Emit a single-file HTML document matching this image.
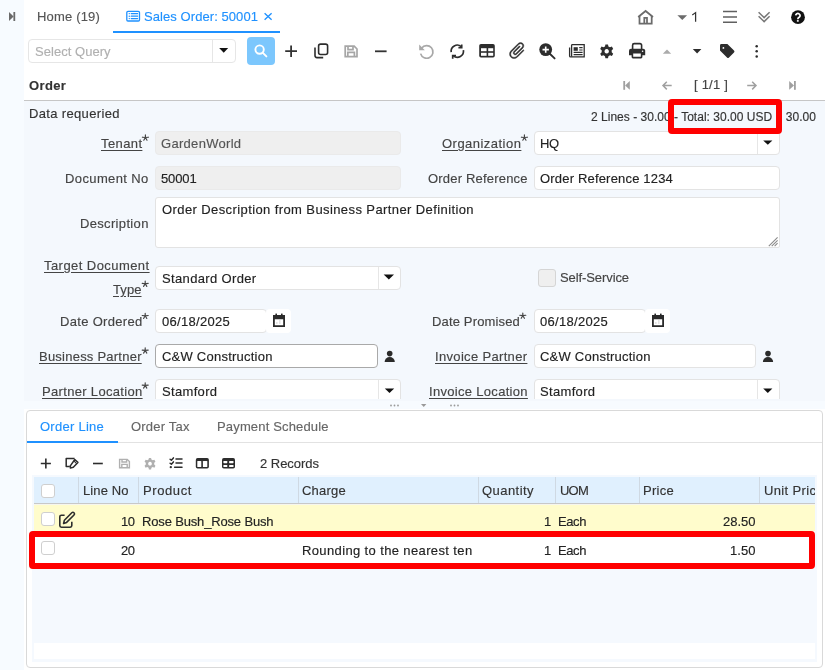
<!DOCTYPE html>
<html><head><meta charset="utf-8">
<style>
*{box-sizing:border-box;margin:0;padding:0}
html,body{width:825px;height:670px;overflow:hidden;background:#fff;font-family:"Liberation Sans",sans-serif;position:relative}
.a{position:absolute}
.t{position:absolute;white-space:pre;will-change:transform;-webkit-text-stroke:0.15px currentColor}
svg{position:absolute;overflow:visible}
.fld{position:absolute;background:#fff;border:1px solid #e3e3e3;border-radius:4px}
.ro{background:#efefef;border-color:#eaeaeaff}
.sep{position:absolute;top:0;bottom:0;width:1px;background:#e6e6e6}
</style></head><body>
<!-- sidebar -->
<div class="a" style="left:0;top:0;width:24px;height:670px;background:#f7fbff"></div>
<svg style="left:0;top:0" width="24" height="30"><path d="M9 12 L13.6 16.5 L9 21 Z" fill="#6a6a6a"/><rect x="13.4" y="12" width="1.8" height="9" fill="#6a6a6a"/></svg>

<!-- tabs -->
<div class="a" style="left:113px;top:31px;width:167px;height:2px;background:#1f91ff"></div>
<svg style="left:0;top:0" width="825" height="40">
 <g fill="none" stroke="#1f91ff">
  <rect x="126.8" y="11.4" width="12.7" height="9.6" rx="1.2" stroke-width="1.3"/>
  <path d="M131.2 13.6H137.6M131.2 16.2H137.6M131.2 18.6H137.6" stroke-width="1.2" stroke-linecap="round"/>
  <path d="M264.6 13.3L271.6 19.8M271.6 13.3L264.6 19.8" stroke-width="1.35"/>
 </g>
 <g fill="#1f91ff"><circle cx="129.3" cy="13.6" r="0.7"/><circle cx="129.3" cy="16.2" r="0.7"/><circle cx="129.3" cy="18.6" r="0.7"/></g>
 <!-- home -->
 <g fill="none" stroke="#6b6b6b" stroke-width="1.75" stroke-linejoin="miter">
  <path d="M638.2 17 L645.6 11 L653 17"/>
  <path d="M639.5 16 V23.6 H651.7 V16"/>
  <path d="M644.3 23.6 V17.8 H647 V23.6"/>
 </g>
 <path d="M677.4 15.2 H687.1 L682.25 20 Z" fill="#6b6b6b"/>
 <path d="M692.3 14.9L695.6 12.6V21.7" fill="none" stroke="#333" stroke-width="1.25"/>
 <g stroke="#606060" stroke-width="1.5"><path d="M723 11.6H737M723 16.9H737M723 22.2H737"/></g>
 <g fill="none" stroke="#777" stroke-width="1.5"><path d="M758.6 12.2L764.1 17.6L769.6 12.2M758.6 16.2L764.1 21.6L769.6 16.2"/></g>
 <circle cx="798" cy="17.2" r="6.9" fill="#111"/>
 <path d="M795.7 15.4A2.2 2.1 0 1 1 799.4 17.1C798.3 17.7 797.8 18.1 797.8 19.3" fill="none" stroke="#fff" stroke-width="1.7"/>
 <rect x="796.9" y="20.1" width="1.8" height="1.6" fill="#fff"/>
</svg>

<!-- select query -->
<div class="fld" style="left:28px;top:39px;width:208px;height:24px;border-color:#e6e6e6"></div>
<div class="a" style="left:212px;top:40px;width:1px;height:22px;background:#e6e6e6"></div>
<svg style="left:0;top:0" width="825" height="100">
 <path d="M219.2 47.9H228.2L223.7 52.8Z" fill="#111"/>
 <rect x="247" y="37" width="28" height="28" rx="4" fill="#7cc7fd"/>
 <g fill="none" stroke="#fff" stroke-width="1.9"><circle cx="259.6" cy="49.6" r="4.2"/><path d="M262.6 52.6L266.4 56.4" stroke-linecap="round"/></g>
 <g stroke="#333" stroke-width="1.8" fill="none">
  <path d="M285.2 51.2H297M291.1 45.4V57"/>
  <path d="M375 51.3H386.6"/>
 </g>
 <!-- copy -->
 <g fill="none" stroke="#2d2d2d" stroke-width="1.6">
  <rect x="318.6" y="44.1" width="9" height="10.4" rx="2"/>
  <path d="M315 47.5V55.6A2 2 0 0 0 317 57.6H323.2"/>
 </g>
 <!-- save gray -->
 <g fill="none" stroke="#a6a6a6" stroke-width="1.7">
  <path d="M345.2 46.2H354.2L357 49V56.6H345.2Z"/>
  <path d="M348 46.2V49.6H353V46.2M347.8 56.6V52.4H354.4V56.6"/>
 </g>
 <!-- undo gray -->
 <g fill="none" stroke="#a8a8a8" stroke-width="1.7">
  <path d="M421.6 48.2A6.3 6.3 0 1 1 420.6 53.6"/>
 </g>
 <path d="M419.2 44.6V50.2H424.8Z" fill="#a8a8a8"/>
 <!-- refresh -->
 <g fill="none" stroke="#2d2d2d" stroke-width="1.7">
  <path d="M451.2 52.2A6.1 6.1 0 0 1 461.2 46.6"/>
  <path d="M461.7 44.4V47.7H458.4"/>
  <path d="M463.4 50.2A6.1 6.1 0 0 1 453.4 55.8"/>
  <path d="M452.7 58.8V55.5H456"/>
 </g>
 <!-- grid -->
 <rect x="479.2" y="44" width="15.6" height="13.6" rx="1.8" fill="#2d2d2d"/>
 <g fill="#fff"><rect x="481" y="48.2" width="5.6" height="3"/><rect x="488.2" y="48.2" width="5" height="3"/><rect x="481" y="52.8" width="5.6" height="3"/><rect x="488.2" y="52.8" width="5" height="3"/></g>
 <!-- paperclip -->
 <path transform="translate(517.3 50.8) rotate(45) scale(0.83) translate(-12.5 -12)" fill="#2d2d2d" stroke="#2d2d2d" stroke-width="0.45" d="M16.5 6v11.5c0 2.21-1.79 4-4 4s-4-1.79-4-4V5c0-1.38 1.12-2.5 2.5-2.5s2.5 1.12 2.5 2.5v10.5c0 .55-.45 1-1 1s-1-.45-1-1V6H10v9.5c0 1.38 1.12 2.5 2.5 2.5s2.5-1.12 2.5-2.5V5c0-2.21-1.79-4-4-4S7 2.79 7 5v12.5c0 3.04 2.46 5.5 5.5 5.5s5.5-2.46 5.5-5.5V6h-1.5z"/>
 <!-- zoom in -->
 <circle cx="545.7" cy="49.6" r="6.4" fill="#2d2d2d"/>
 <path d="M549.8 53.8L554.6 58.4" stroke="#2d2d2d" stroke-width="1.9" stroke-linecap="round"/>
 <path d="M542.5 49.6H548.9M545.7 46.4V52.8" stroke="#fff" stroke-width="1.6"/>
 <!-- news -->
 <g fill="none" stroke="#2d2d2d" stroke-width="1.3">
  <path d="M571.6 44.6H584.2V56.9H570.6A1 1 0 0 1 569.6 55.9V47.5"/>
  <path d="M571.6 44.6V56.6"/>
 </g>
 <rect x="573.6" y="47.2" width="4.2" height="3.6" fill="#2d2d2d"/>
 <path d="M579.2 47.6H582.6M579.2 50H582.6M573.6 52.4H582.6M573.6 54.6H582.6" stroke="#2d2d2d" stroke-width="1.1"/>
 <!-- gear -->
 <g transform="translate(606.7 51.3)">
  <path fill="#2d2d2d" fill-rule="evenodd" d="M-1.3 -6.9H1.3L1.7 -4.9L3.3 -4L5.2 -4.7L6.5 -2.4L5 -1V1L6.5 2.4L5.2 4.7L3.3 4L1.7 4.9L1.3 6.9H-1.3L-1.7 4.9L-3.3 4L-5.2 4.7L-6.5 2.4L-5 1V-1L-6.5 -2.4L-5.2 -4.7L-3.3 -4L-1.7 -4.9Z M0 -2.2A2.2 2.2 0 1 0 0.01 -2.2Z"/>
 </g>
 <!-- printer -->
 <g fill="none" stroke="#2d2d2d" stroke-width="1.6">
  <path d="M632.6 49V45.2A1.6 1.6 0 0 1 634.2 43.6H640A1.6 1.6 0 0 1 641.6 45.2V49"/>
 </g>
 <path d="M631 48.8H643.2A2 2 0 0 1 645.2 50.8V55.2H629V50.8A2 2 0 0 1 631 48.8Z" fill="#2d2d2d"/>
 <rect x="632.4" y="52.8" width="9.2" height="4.8" rx="0.6" fill="#fff" stroke="#2d2d2d" stroke-width="1.6"/>
 <circle cx="642.6" cy="51.2" r="0.8" fill="#fff"/>
 <!-- up/down -->
 <path d="M662.8 53.8H671.2L667 49.6Z" fill="#ababab"/>
 <path d="M692.8 49H701.4L697.1 53.6Z" fill="#2d2d2d"/>
 <!-- tag -->
 <path d="M721.4 44H727.4L734 50.6A1.4 1.4 0 0 1 734 52.6L729 57.6A1.4 1.4 0 0 1 727 57.6L720 50.6V45.4A1.4 1.4 0 0 1 721.4 44Z" fill="#2d2d2d"/>
 <circle cx="723.4" cy="47.9" r="0.9" fill="#fff"/>
 <g fill="#2d2d2d"><circle cx="756.7" cy="46.2" r="1.25"/><circle cx="756.7" cy="51.3" r="1.25"/><circle cx="756.7" cy="56.5" r="1.25"/></g>
 <!-- page nav -->
 <g fill="#a0a0a0">
  <rect x="623.3" y="81" width="1.8" height="8.8"/><path d="M625.1 85.4L629.8 81V89.8Z"/>
  <rect x="794" y="81" width="1.8" height="8.8"/><path d="M794 85.4L789.2 81V89.8Z"/>
 </g>
 <g fill="none" stroke="#a0a0a0" stroke-width="1.5">
  <path d="M663 85.6H671.7M666.8 81.8L663 85.6L666.8 89.4"/>
  <path d="M756 85.6H747.2M752.2 81.8L756 85.6L752.2 89.4"/>
 </g>
</svg>

<!-- order header line -->
<div class="a" style="left:24px;top:100px;width:801px;height:1px;background:#c6c6c6"></div>
<!-- form bg -->
<div class="a" style="left:24px;top:101px;width:801px;height:300px;background:#f4f8fd"></div>
<div class="a" style="left:24px;top:101px;width:801px;height:298px;overflow:hidden">
 <div style="position:absolute;left:-24px;top:-101px;width:825px;height:670px">
  <div class="fld ro" style="left:155px;top:131px;width:246px;height:24px"></div>
  <div class="fld ro" style="left:155px;top:166px;width:246px;height:24px"></div>
  <div class="fld" style="left:155px;top:197px;width:625px;height:51px;border-radius:3px 3px 2px 3px"></div>
  <div class="fld" style="left:155px;top:266px;width:246px;height:24px"><div class="sep" style="left:222px"></div></div>
  <div class="fld" style="left:155px;top:309px;width:112px;height:24px"></div>
  <div class="fld" style="left:266px;top:309px;width:25px;height:24px;border-color:transparent;background:#fff"></div>
  <div class="fld" style="left:155px;top:344px;width:223px;height:24px;border-color:#a9a9a9"></div>
  <div class="fld" style="left:155px;top:379px;width:246px;height:24px"><div class="sep" style="left:222px"></div></div>

  <div class="fld" style="left:534px;top:131px;width:246px;height:24px"><div class="sep" style="left:222px"></div></div>
  <div class="fld" style="left:534px;top:166px;width:246px;height:24px"></div>
  <div class="fld" style="left:538px;top:269px;width:18px;height:18px;background:#efefef;border-color:#d5d5d5;border-radius:3px"></div>
  <div class="fld" style="left:534px;top:309px;width:112px;height:24px"></div>
  <div class="fld" style="left:645px;top:309px;width:25px;height:24px;border-color:transparent;background:#fff"></div>
  <div class="fld" style="left:534px;top:344px;width:222px;height:24px"></div>
  <div class="fld" style="left:534px;top:379px;width:246px;height:24px"><div class="sep" style="left:222px"></div></div>
  <svg style="left:0;top:0" width="825" height="420">
   <g fill="#111">
    <path d="M383.7 274.6H394L388.85 279.6Z"/>
    <path d="M384.8 388.4H394.2L389.5 393Z"/>
    <path d="M763.2 140.4H772.4L767.8 144.8Z"/>
    <path d="M763.2 388.4H772.4L767.8 393Z"/>
   </g>
   <!-- textarea grip -->
   <path d="M768.8 246.2L777.6 237.4M771.7 246.2L777.6 240.3M774.6 246.2L777.6 243.2" stroke="#8a8a8a" stroke-width="1.1"/>
   <!-- calendars -->
   <g fill="#2a2a2a">
    <path d="M273 315H285V327H273Z M274.8 319.2V325.2H283.2V319.2Z" fill-rule="evenodd"/>
    <rect x="275.4" y="313.6" width="1.6" height="2"/><rect x="281" y="313.6" width="1.6" height="2"/>
    <path d="M652 315H664V327H652Z M653.8 319.2V325.2H662.2V319.2Z" fill-rule="evenodd"/>
    <rect x="654.4" y="313.6" width="1.6" height="2"/><rect x="660" y="313.6" width="1.6" height="2"/>
   </g>
   <g fill="#bbb"><rect x="279" y="320.6" width="1.6" height="0.8"/><rect x="276" y="322.6" width="1.6" height="0.8"/><rect x="279" y="322.6" width="1.6" height="0.8"/><rect x="658" y="320.6" width="1.6" height="0.8"/><rect x="655" y="322.6" width="1.6" height="0.8"/><rect x="658" y="322.6" width="1.6" height="0.8"/></g>
   <!-- persons -->
   <g fill="#2a2a2a">
    <circle cx="389.7" cy="353.6" r="2.8"/><path d="M384.6 362A5.1 5 0 0 1 394.8 362Z"/>
    <circle cx="768" cy="353.6" r="2.8"/><path d="M762.9 362A5.1 5 0 0 1 773.1 362Z"/>
   </g>
  </svg>
 </div>
</div>
<!-- splitter -->
<div class="a" style="left:24px;top:401px;width:801px;height:8px;background:#f7fbff"></div>
<svg style="left:0;top:0" width="825" height="420">
 <g fill="#9a9a9a"><circle cx="391" cy="405.5" r="0.9"/><circle cx="394.5" cy="405.5" r="0.9"/><circle cx="398" cy="405.5" r="0.9"/>
 <circle cx="451" cy="405.5" r="0.9"/><circle cx="454.5" cy="405.5" r="0.9"/><circle cx="458" cy="405.5" r="0.9"/>
 <path d="M421 404H426.4L423.7 407Z"/></g>
</svg>

<!-- detail panel -->
<div class="a" style="left:26px;top:410px;width:797px;height:258px;border:1px solid #d9d9d9;border-radius:4px;background:#fff"></div>
<div class="a" style="left:27px;top:442px;width:795px;height:1px;background:#e2e2e2"></div>
<div class="a" style="left:27px;top:441px;width:91px;height:2px;background:#1f91ff"></div>
<svg style="left:0;top:0" width="825" height="480">
 <g stroke="#2d2d2d" stroke-width="1.6" fill="none">
  <path d="M40.8 463.5H50.9M45.85 458.5V468.5"/>
  <path d="M93 463.5H102.8"/>
</g>
 <g fill="none" stroke="#2d2d2d" stroke-width="1.5" stroke-linejoin="round">
  <path d="M74.6 458.6H66.2V466.4H69.8"/>
  <path d="M70.4 468L70.3 465.9L74.8 459.5L77.9 462.4L73.3 467.2Z"/>
  <path d="M73.9 460.9L76.7 463.7" stroke-width="1.1"/>
 </g>
 <g fill="none" stroke="#b0b0b0" stroke-width="1.4">
  <path d="M119.6 459.4H127.2L129.4 461.6V467.8H119.6Z"/>
  <path d="M122 459.4V462H126.6V459.4M121.8 467.8V464.4H127.2V467.8"/>
 </g>
 <g transform="translate(150 463.7) scale(0.84)">
  <path fill="#b0b0b0" fill-rule="evenodd" d="M-1.3 -6.9H1.3L1.7 -4.9L3.3 -4L5.2 -4.7L6.5 -2.4L5 -1V1L6.5 2.4L5.2 4.7L3.3 4L1.7 4.9L1.3 6.9H-1.3L-1.7 4.9L-3.3 4L-5.2 4.7L-6.5 2.4L-5 1V-1L-6.5 -2.4L-5.2 -4.7L-3.3 -4L-1.7 -4.9Z M0 -2.2A2.2 2.2 0 1 0 0.01 -2.2Z"/>
 </g>
 <g fill="none" stroke="#2d2d2d" stroke-width="1.5" stroke-linecap="round" stroke-linejoin="round">
  <path d="M170.1 459.2L171.4 460.3L173.4 457.9M170.1 463.2L171.4 464.3L173.4 461.9"/>
  <path d="M176 459.1H182M176 463.1H182M174.6 467.2H182"/>
 </g>
 <circle cx="170.8" cy="467.2" r="1.15" fill="#2d2d2d"/>
 <rect x="195.8" y="458.1" width="13.1" height="10.4" rx="1.8" fill="#2d2d2d"/>
 <g fill="#fff"><rect x="197.3" y="461" width="4" height="6.1" rx="0.6"/><rect x="202.9" y="461" width="4.4" height="6.1" rx="0.6"/></g>
 <rect x="222" y="458.1" width="13" height="10.4" rx="1.8" fill="#2d2d2d"/>
 <g fill="#fff"><rect x="223.4" y="461" width="3.9" height="2.2" rx="0.6"/><rect x="229.1" y="461" width="4.4" height="2.2" rx="0.6"/><rect x="223.4" y="464.9" width="3.9" height="2.2" rx="0.6"/><rect x="229.1" y="464.9" width="4.4" height="2.2" rx="0.6"/></g>
</svg>

<!-- grid -->
<div class="a" style="left:32px;top:475px;width:785px;height:187px;background:#f5f9fe"></div>
<div class="a" style="left:34px;top:477px;width:781px;height:27px;background:#e0f0fe;border-bottom:1px solid #c8c8c8"></div>
<div class="a" style="left:34px;top:504px;width:781px;height:27px;background:#fffccc;border-top:1px solid #f6f6ee"></div>
<div class="a" style="left:34px;top:531px;width:781px;height:34px;background:#fff"></div>
<div class="a" style="left:34px;top:643px;width:781px;height:16px;background:#fff"></div>
<div class="a" style="left:78px;top:477px;width:1px;height:26px;background:#cfd9e3"></div>
<div class="a" style="left:138px;top:477px;width:1px;height:26px;background:#cfd9e3"></div>
<div class="a" style="left:298px;top:477px;width:1px;height:26px;background:#cfd9e3"></div>
<div class="a" style="left:478px;top:477px;width:1px;height:26px;background:#cfd9e3"></div>
<div class="a" style="left:555px;top:477px;width:1px;height:26px;background:#cfd9e3"></div>
<div class="a" style="left:639px;top:477px;width:1px;height:26px;background:#cfd9e3"></div>
<div class="a" style="left:759px;top:477px;width:1px;height:26px;background:#cfd9e3"></div>
<div class="a" style="left:41px;top:484px;width:14px;height:14px;background:#fff;border:1px solid #cfcfcf;border-radius:3px"></div>
<div class="a" style="left:41px;top:512px;width:14px;height:14px;background:#fff;border:1px solid #cfcfcf;border-radius:3px"></div>
<div class="a" style="left:41px;top:541px;width:14px;height:14px;background:#fff;border:1px solid #cfcfcf;border-radius:3px"></div>
<svg style="left:0;top:0" width="825" height="540">
 <g fill="none" stroke="#2d2d2d" stroke-width="1.6" stroke-linejoin="round">
  <path d="M64.6 515.2H61.4A1.6 1.6 0 0 0 59.8 516.8V525.6A1.6 1.6 0 0 0 61.4 527.2H70.2A1.6 1.6 0 0 0 71.8 525.6V521.8"/>
  <path d="M63.6 523.4L64.4 520.2L71.8 512.8A1.5 1.5 0 0 1 74 515L66.6 522.4Z"/>
 </g>
</svg>

<div class="t" style="top:9.00px;font-size:13px;line-height:15px;color:#555;letter-spacing:0.175px;left:37.00px;">Home (19)</div>
<div class="t" style="top:9.00px;font-size:13px;line-height:15px;color:#1f91ff;letter-spacing:0.070px;left:144.00px;">Sales Order: 50001</div>
<div class="t" style="top:44.20px;font-size:13px;line-height:15px;color:#b0b0b0;letter-spacing:0.037px;left:34.70px;">Select Query</div>
<div class="t" style="top:78.00px;font-size:13px;line-height:15px;color:#333;font-weight:700;letter-spacing:0.359px;left:29.30px;">Order</div>
<div class="t" style="top:76.90px;font-size:13px;line-height:15px;color:#444;letter-spacing:0.210px;left:693.60px;">[ 1/1 ]</div>
<div class="t" style="top:106.00px;font-size:13px;line-height:15px;color:#333;letter-spacing:0.343px;left:28.50px;">Data requeried</div>
<div class="t" style="top:109.84px;font-size:12px;line-height:14px;color:#333;letter-spacing:0.017px;right:8.98px;">2 Lines - 30.00 - Total: 30.00 USD = 30.00</div>
<div class="t" style="top:135.70px;font-size:13px;line-height:15px;color:#444;letter-spacing:0.392px;right:682.61px;text-decoration:underline;text-underline-offset:2px;">Tenant</div>
<div class="t" style="top:171.00px;font-size:13px;line-height:15px;color:#444;letter-spacing:0.383px;right:676.12px;">Document No</div>
<div class="t" style="top:215.70px;font-size:13px;line-height:15px;color:#444;letter-spacing:0.334px;right:676.17px;">Description</div>
<div class="t" style="top:258.00px;font-size:13px;line-height:15px;color:#444;letter-spacing:0.440px;right:675.56px;text-decoration:underline;text-underline-offset:2px;">Target Document</div>
<div class="t" style="top:281.90px;font-size:13px;line-height:15px;color:#444;letter-spacing:0.078px;right:683.12px;text-decoration:underline;text-underline-offset:2px;">Type</div>
<div class="t" style="top:314.00px;font-size:13px;line-height:15px;color:#444;letter-spacing:0.320px;right:682.88px;">Date Ordered</div>
<div class="t" style="top:348.60px;font-size:13px;line-height:15px;color:#444;letter-spacing:0.231px;right:682.97px;text-decoration:underline;text-underline-offset:2px;">Business Partner</div>
<div class="t" style="top:383.60px;font-size:13px;line-height:15px;color:#444;letter-spacing:0.325px;right:682.88px;text-decoration:underline;text-underline-offset:2px;">Partner Location</div>
<div class="t" style="top:135.70px;font-size:13px;line-height:15px;color:#444;letter-spacing:0.473px;right:303.53px;text-decoration:underline;text-underline-offset:2px;">Organization</div>
<div class="t" style="top:171.00px;font-size:13px;line-height:15px;color:#444;letter-spacing:0.191px;right:297.51px;">Order Reference</div>
<div class="t" style="top:313.80px;font-size:13px;line-height:15px;color:#444;letter-spacing:0.155px;right:305.44px;">Date Promised</div>
<div class="t" style="top:349.00px;font-size:13px;line-height:15px;color:#444;letter-spacing:0.331px;right:297.27px;text-decoration:underline;text-underline-offset:2px;">Invoice Partner</div>
<div class="t" style="top:383.60px;font-size:13px;line-height:15px;color:#444;letter-spacing:0.309px;right:297.29px;text-decoration:underline;text-underline-offset:2px;">Invoice Location</div>
<div class="t" style="top:269.70px;font-size:13px;line-height:15px;color:#444;letter-spacing:-0.090px;left:560.00px;">Self-Service</div>
<div class="t" style="top:136.00px;font-size:13px;line-height:15px;color:#555;letter-spacing:0.302px;left:161.40px;">GardenWorld</div>
<div class="t" style="top:171.00px;font-size:13px;line-height:15px;color:#222;letter-spacing:-0.111px;left:161.40px;">50001</div>
<div class="t" style="top:202.40px;font-size:13px;line-height:15px;color:#222;letter-spacing:0.402px;left:161.50px;">Order Description from Business Partner Definition</div>
<div class="t" style="top:270.80px;font-size:13px;line-height:15px;color:#222;letter-spacing:0.349px;left:161.50px;">Standard Order</div>
<div class="t" style="top:313.50px;font-size:13px;line-height:15px;color:#222;letter-spacing:0.292px;left:161.70px;">06/18/2025</div>
<div class="t" style="top:348.80px;font-size:13px;line-height:15px;color:#222;letter-spacing:0.230px;left:161.70px;">C&amp;W Construction</div>
<div class="t" style="top:383.80px;font-size:13px;line-height:15px;color:#222;letter-spacing:0.331px;left:161.70px;clip-path:inset(0 -20px -0.20px -20px);">Stamford</div>
<div class="t" style="top:135.90px;font-size:13px;line-height:15px;color:#222;letter-spacing:-0.450px;left:540.40px;">HQ</div>
<div class="t" style="top:170.50px;font-size:13px;line-height:15px;color:#222;letter-spacing:0.182px;left:540.40px;">Order Reference 1234</div>
<div class="t" style="top:313.50px;font-size:13px;line-height:15px;color:#222;letter-spacing:0.292px;left:540.40px;">06/18/2025</div>
<div class="t" style="top:348.80px;font-size:13px;line-height:15px;color:#222;letter-spacing:0.230px;left:540.40px;">C&amp;W Construction</div>
<div class="t" style="top:383.80px;font-size:13px;line-height:15px;color:#222;letter-spacing:0.331px;left:540.40px;clip-path:inset(0 -20px -0.20px -20px);">Stamford</div>
<div class="t" style="top:419.00px;font-size:13px;line-height:15px;color:#1f91ff;letter-spacing:0.258px;left:40.30px;">Order Line</div>
<div class="t" style="top:419.00px;font-size:13px;line-height:15px;color:#666;letter-spacing:0.195px;left:131.40px;">Order Tax</div>
<div class="t" style="top:419.00px;font-size:13px;line-height:15px;color:#666;letter-spacing:0.161px;left:216.80px;">Payment Schedule</div>
<div class="t" style="top:455.80px;font-size:13px;line-height:15px;color:#333;letter-spacing:-0.028px;left:259.80px;">2 Records</div>
<div class="t" style="top:482.60px;font-size:13px;line-height:15px;color:#333;letter-spacing:0.098px;left:82.50px;">Line No</div>
<div class="t" style="top:482.60px;font-size:13px;line-height:15px;color:#333;letter-spacing:0.598px;left:142.50px;">Product</div>
<div class="t" style="top:482.60px;font-size:13px;line-height:15px;color:#333;letter-spacing:0.227px;left:302.00px;">Charge</div>
<div class="t" style="top:482.60px;font-size:13px;line-height:15px;color:#333;letter-spacing:0.447px;left:482.40px;">Quantity</div>
<div class="t" style="top:482.60px;font-size:13px;line-height:15px;color:#333;letter-spacing:-0.781px;left:559.50px;">UOM</div>
<div class="t" style="top:482.60px;font-size:13px;line-height:15px;color:#333;letter-spacing:0.275px;left:643.30px;">Price</div>
<div class="t" style="top:482.60px;font-size:13px;line-height:15px;color:#333;letter-spacing:0.364px;left:763.60px;width:51.40px;overflow:hidden;">Unit Price</div>
<div class="t" style="top:513.70px;font-size:13px;line-height:15px;color:#222;letter-spacing:-0.484px;right:690.78px;">10</div>
<div class="t" style="top:513.70px;font-size:13px;line-height:15px;color:#222;letter-spacing:-0.159px;left:141.60px;">Rose Bush_Rose Bush</div>
<div class="t" style="top:513.70px;font-size:13px;line-height:15px;color:#222;letter-spacing:-2.234px;right:276.43px;">1</div>
<div class="t" style="top:513.70px;font-size:13px;line-height:15px;color:#222;letter-spacing:-0.410px;left:558.30px;">Each</div>
<div class="t" style="top:513.70px;font-size:13px;line-height:15px;color:#222;right:69.71px;">28.50</div>
<div class="t" style="top:542.50px;font-size:13px;line-height:15px;color:#222;letter-spacing:-0.484px;right:690.78px;">20</div>
<div class="t" style="top:542.50px;font-size:13px;line-height:15px;color:#222;letter-spacing:0.372px;left:301.50px;">Rounding to the nearest ten</div>
<div class="t" style="top:542.50px;font-size:13px;line-height:15px;color:#222;letter-spacing:-2.234px;right:276.43px;">1</div>
<div class="t" style="top:542.50px;font-size:13px;line-height:15px;color:#222;letter-spacing:-0.410px;left:558.30px;">Each</div>
<div class="t" style="top:542.50px;font-size:13px;line-height:15px;color:#222;letter-spacing:0.047px;right:69.65px;">1.50</div>
<svg style="left:0;top:0" width="825" height="420"><g stroke="#444" stroke-width="1.15" fill="none" stroke-linecap="round"><path d="M145.40 134.90V137.50M142.40 137.20L145.40 137.50L148.40 137.20M143.80 140.20L145.40 137.50L147.00 140.20"/><path d="M145.20 281.10V283.70M142.20 283.40L145.20 283.70L148.20 283.40M143.60 286.40L145.20 283.70L146.80 286.40"/><path d="M145.20 313.20V315.80M142.20 315.50L145.20 315.80L148.20 315.50M143.60 318.50L145.20 315.80L146.80 318.50"/><path d="M145.20 347.80V350.40M142.20 350.10L145.20 350.40L148.20 350.10M143.60 353.10L145.20 350.40L146.80 353.10"/><path d="M145.20 382.80V385.40M142.20 385.10L145.20 385.40L148.20 385.10M143.60 388.10L145.20 385.40L146.80 388.10"/><path d="M524.40 134.90V137.50M521.40 137.20L524.40 137.50L527.40 137.20M522.80 140.20L524.40 137.50L526.00 140.20"/><path d="M522.80 313.00V315.60M519.80 315.30L522.80 315.60L525.80 315.30M521.20 318.30L522.80 315.60L524.40 318.30"/></g></svg>

<!-- clip overlays -->
<div class="a" style="left:815px;top:477px;width:2px;height:27px;background:#f5f9fe"></div>
<div class="a" style="left:817px;top:477px;width:5px;height:27px;background:#fff"></div>

<!-- red boxes -->
<div class="a" style="left:668px;top:99px;width:114px;height:35px;border:6px solid #ff0000;border-radius:4px"></div>
<div class="a" style="left:29px;top:531px;width:786px;height:38px;border:6px solid #ff0000;border-radius:4px"></div>
</body></html>
